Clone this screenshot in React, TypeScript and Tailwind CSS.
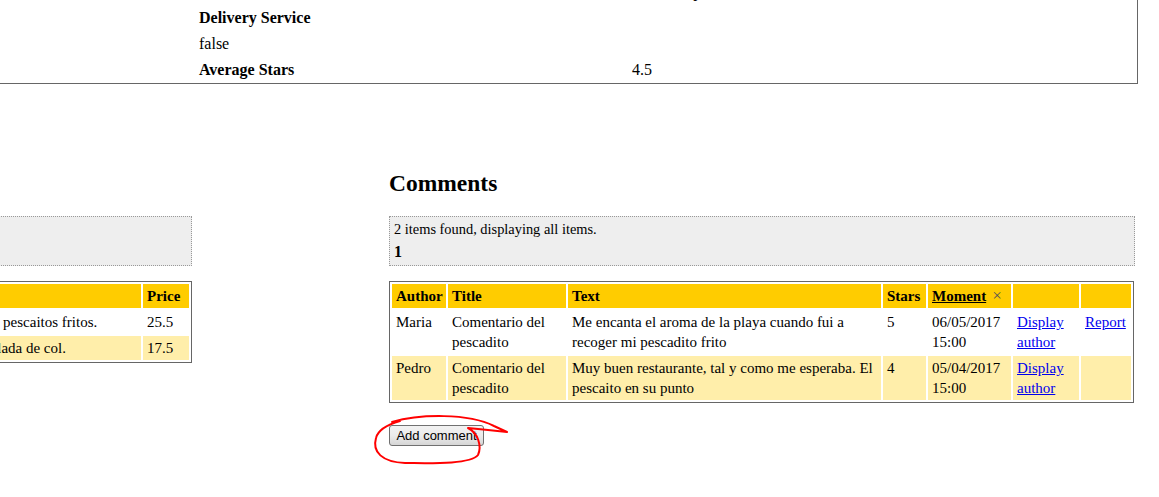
import React from "react";

interface Comment {
	author: string;
	title: string;
	text: string;
	stars: number;
	moment: string[];
	canReport: boolean;
}

const COMMENTS: Comment[] = [
	{
		author: "Maria",
		title: "Comentario del pescadito",
		text: "Me encanta el aroma de la playa cuando fui a recoger mi pescadito frito",
		stars: 5,
		moment: ["06/05/2017", "15:00"],
		canReport: true,
	},
	{
		author: "Pedro",
		title: "Comentario del pescadito",
		text: "Muy buen restaurante, tal y como me esperaba. El pescaito en su punto",
		stars: 4,
		moment: ["05/04/2017", "15:00"],
		canReport: false,
	},
];

const PRODUCTS = [
	{ name: "Pescaito", description: "Un platito de pescaitos fritos.", price: "25.5" },
	{ name: "Ensalada", description: "Cuenco ensalada de col.", price: "17.5" },
];

const th = "bg-[#ffcc00] text-left font-bold px-[4px] py-[2px] align-top";
const td = "px-[4px] py-[2px] align-top";

function Pagination({ count }: { count: number }) {
	return (
		<div className="border border-dotted border-[#999] bg-[#eeeeee] pt-[2px] pb-[3px] px-[4px]">
			<div className="h-[20px] leading-[20px] text-[14.4px] whitespace-nowrap">
				{count} items found, displaying all items.
			</div>
			<div className="mt-[3px] h-[20px] leading-[20px] text-[16px] font-bold">1</div>
		</div>
	);
}

function Link({ children }: { children: React.ReactNode }) {
	return <a href="#" className="text-[#0000ee] underline">{children}</a>;
}

export default function App() {
	return (
		<div
			className="relative w-[1159px] h-[497px] overflow-hidden bg-white text-black"
			style={{ fontFamily: '"Liberation Serif", "Times New Roman", serif' }}
		>
			{/* restaurant details box, scrolled partly off screen */}
			<div className="-ml-[10px] -mt-[22px] w-[1148px] border border-[#666] pl-[208px] text-[16px]">
				<div className="grid grid-cols-[433px_1fr] leading-[26px]">
					<div className="h-[26px]" />
					<div className="h-[26px]">Cádiz, España</div>
					<div className="h-[26px] font-bold">Delivery Service</div>
					<div className="h-[26px]" />
					<div className="h-[26px]">false</div>
					<div className="h-[26px]" />
					<div className="h-[26px] font-bold">Average Stars</div>
					<div className="h-[26px]">4.5</div>
				</div>
			</div>

			<div className="mt-[85px] flex">
				{/* products column */}
				<div className="-ml-[240px] w-[432px] shrink-0">
					<h2 className="h-[28px] leading-[28px] text-[23.5px] font-bold">Products</h2>
					<div className="mt-[19px]">
						<Pagination count={2} />
					</div>
					<table className="mt-[15px] w-[432px] table-fixed border-separate border-spacing-[2px] border border-[#666] text-[15px] leading-[20px]">
						<colgroup>
							<col className="w-[152px]" />
							<col className="w-[224px]" />
							<col className="w-[46px]" />
						</colgroup>
						<thead>
							<tr>
								<th className={th}>Name</th>
								<th className={th}>Description</th>
								<th className={th}>Price</th>
							</tr>
						</thead>
						<tbody>
							{PRODUCTS.map((p, i) => (
								<tr key={p.name} className={i % 2 === 1 ? "bg-[#ffeeaa]" : "bg-white"}>
									<td className={td}>{p.name}</td>
									<td className={`${td} whitespace-nowrap`}>{p.description}</td>
									<td className={td}>{p.price}</td>
								</tr>
							))}
						</tbody>
					</table>
				</div>

				{/* comments column */}
				<div className="ml-[197px] w-[746px] shrink-0">
					<h2 className="h-[28px] leading-[28px] text-[23.5px] font-bold">Comments</h2>
					<div className="mt-[19px]">
						<Pagination count={2} />
					</div>
					<table className="mt-[15px] w-[745px] table-fixed border-separate border-spacing-[2px] border border-[#666] text-[15px] leading-[20px]">
						<colgroup>
							<col className="w-[54px]" />
							<col className="w-[118px]" />
							<col className="w-[313px]" />
							<col className="w-[43px]" />
							<col className="w-[83px]" />
							<col className="w-[66px]" />
							<col className="w-[50px]" />
						</colgroup>
						<thead>
							<tr>
								<th className={th}>Author</th>
								<th className={th}>Title</th>
								<th className={th}>Text</th>
								<th className={th}>Stars</th>
								<th className={`${th} whitespace-nowrap`}>
									<a href="#" className="underline">Moment</a>
									<span className="ml-[6px] text-[17px] font-normal text-[#555]">×</span>
								</th>
								<th className={th} />
								<th className={th} />
							</tr>
						</thead>
						<tbody>
							{COMMENTS.map((c, i) => (
								<tr key={c.author} className={i % 2 === 1 ? "bg-[#ffeeaa]" : "bg-white"}>
									<td className={td}>{c.author}</td>
									<td className={td}>{c.title}</td>
									<td className={td}>{c.text}</td>
									<td className={td}>{c.stars}</td>
									<td className={td}>
										{c.moment[0]}
										<br />
										{c.moment[1]}
									</td>
									<td className={td}>
										<Link>Display author</Link>
									</td>
									<td className={td}>{c.canReport && <Link>Report</Link>}</td>
								</tr>
							))}
						</tbody>
					</table>
					<button
						type="button"
						className="mt-[22px] h-[21px] w-[95px] rounded-[3px] border border-[#707070] bg-gradient-to-b from-[#f2f2f2] via-[#ebebeb] to-[#d6d6d6] text-[13px] leading-[19px] text-black"
						style={{ fontFamily: '"Liberation Sans", Arial, sans-serif' }}
					>
						Add comment
					</button>
				</div>
			</div>

			{/* hand-drawn red circle around the button */}
			<svg className="pointer-events-none absolute left-0 top-0" width="1159" height="497">
				<path
					d="M392 422 C420 414 468 413 494 426 L507 432 L488 430 L468 428 C478 433 482 446 478 455 C470 465 425 463 405 463 C382 462 372 452 376 438 C378 430 386 425 400 421"
					fill="none"
					stroke="#ff0000"
					strokeWidth="2"
					strokeLinecap="round"
					strokeLinejoin="round"
				/>
			</svg>
		</div>
	);
}
